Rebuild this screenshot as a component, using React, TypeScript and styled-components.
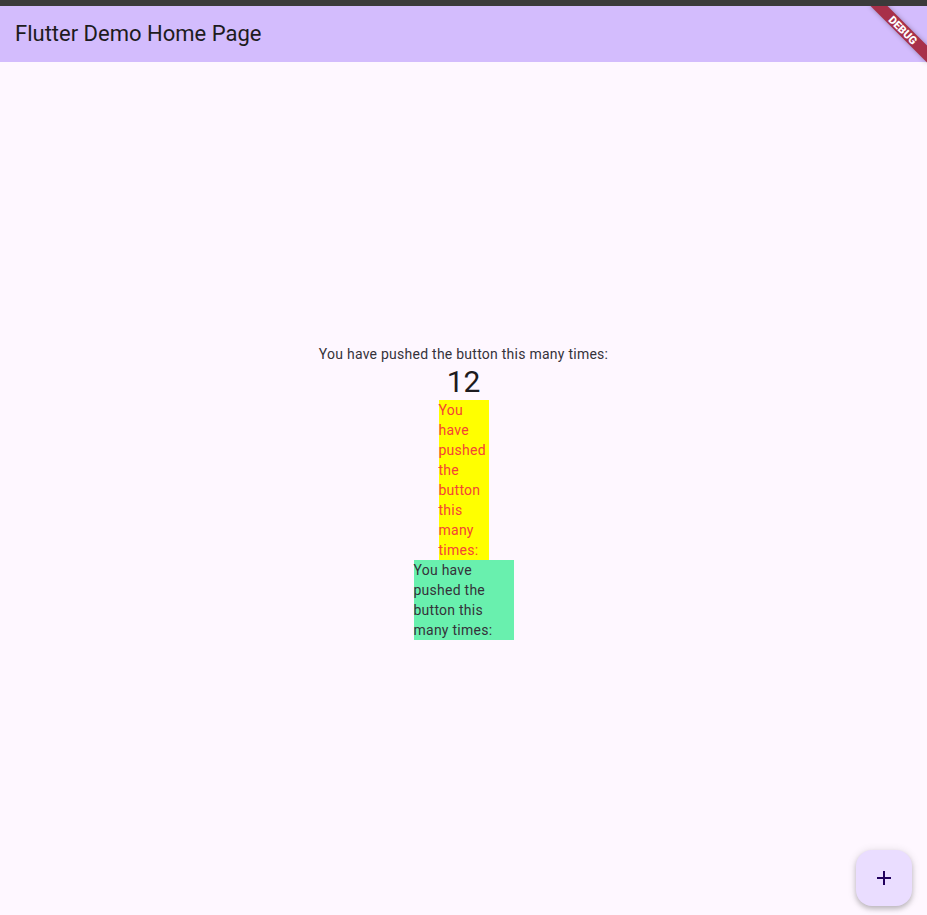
import React from "react";
import styled, { createGlobalStyle } from "styled-components";

const Global = createGlobalStyle`
  html, body { margin: 0; padding: 0; }
  body {
    background: #fef7ff;
    font-family: Roboto, "Noto Sans", sans-serif;
    color: #1d1b20;
  }
  #root { height: 915px; }
`;

const Screen = styled.div`
  position: relative;
  height: 915px;
  display: flex;
  flex-direction: column;
  overflow: hidden;
  background: #fef7ff;
`;

const StatusStrip = styled.div`
  height: 6px;
  background: #3b3b3b;
  flex: none;
`;

const AppBar = styled.header`
  position: relative;
  height: 56px;
  flex: none;
  background: #d3bcfd;
  display: flex;
  align-items: center;
  padding: 0 15px;
  overflow: hidden;
`;

const Title = styled.h1`
  margin: 0;
  font-family: Roboto, sans-serif;
  font-weight: 400;
  font-size: 22px;
  line-height: 28px;
  color: #1d1b20;
`;

const BannerClip = styled.div`
  position: absolute;
  top: 6px;
  right: 0;
  width: 80px;
  height: 80px;
  overflow: hidden;
  pointer-events: none;
  z-index: 5;
`;

const Ribbon = styled.div`
  position: absolute;
  left: calc(80px - 24px - 40px);
  top: calc(24px - 6px);
  width: 80px;
  height: 12px;
  transform: rotate(45deg);
  background: #a83049;
  box-shadow: 0 0 5px rgba(0, 0, 0, 0.3);
  display: flex;
  align-items: center;
  justify-content: center;
  color: #ffffff;
  font-family: Roboto, sans-serif;
  font-weight: 900;
  font-size: 11px;
  line-height: 1;
  letter-spacing: 0;
`;

const Body = styled.main`
  flex: 1;
  padding-top: 6px;
  display: flex;
  flex-direction: column;
  align-items: center;
  justify-content: center;
`;

const Label = styled.div`
  font-size: 14px;
  line-height: 20px;
  letter-spacing: 0.25px;
  color: #35323a;
`;

const Counter = styled.div`
  font-size: 30px;
  line-height: 36px;
  color: #1d1b20;
`;

const Box = styled.div<{ $w: number; $bg: string; $fg: string }>`
  width: ${(p) => p.$w}px;
  background: ${(p) => p.$bg};
  color: ${(p) => p.$fg};
  font-size: 14px;
  line-height: 20px;
  letter-spacing: 0.25px;
  text-align: left;
  word-wrap: break-word;
`;

const Fab = styled.button`
  position: absolute;
  right: 15px;
  bottom: 9px;
  width: 56px;
  height: 56px;
  border: none;
  border-radius: 16px;
  background: #eaddff;
  box-shadow: 0 3px 5px rgba(0, 0, 0, 0.2), 0 1px 10px rgba(0, 0, 0, 0.12);
  display: flex;
  align-items: center;
  justify-content: center;
  padding: 0;
  cursor: pointer;
`;

const msg = "You have pushed the button this many times:";

export default function App() {
  return (
    <>
      <Global />
      <Screen>
        <StatusStrip />
        <AppBar>
          <Title>Flutter Demo Home Page</Title>
        </AppBar>
        <BannerClip>
          <Ribbon>DEBUG</Ribbon>
        </BannerClip>
        <Body>
          <Label>{msg}</Label>
          <Counter>12</Counter>
          <Box $w={50} $bg="#ffff00" $fg="#f44336">{msg}</Box>
          <Box $w={100} $bg="#69f0ae" $fg="#35323a">{msg}</Box>
        </Body>
        <Fab aria-label="Increment">
          <svg width="24" height="24" viewBox="0 0 24 24">
            <path d="M19 13h-6v6h-2v-6H5v-2h6V5h2v6h6v2z" fill="#21005d" />
          </svg>
        </Fab>
      </Screen>
    </>
  );
}
